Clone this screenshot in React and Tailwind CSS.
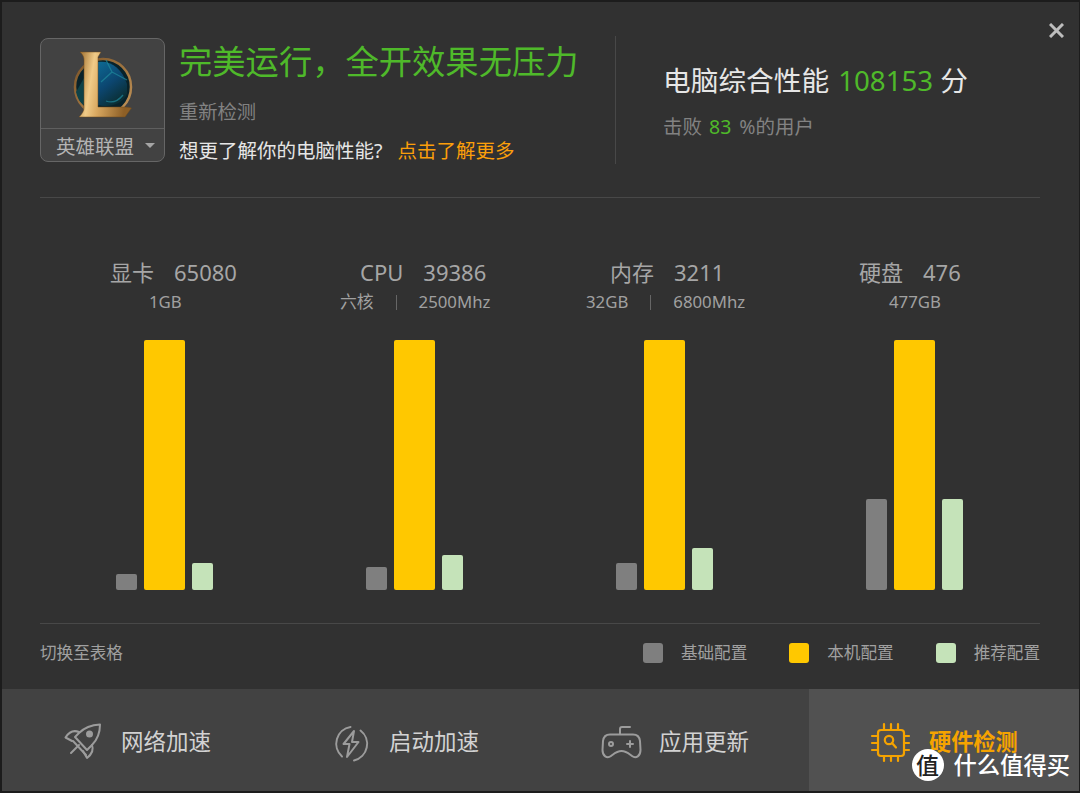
const parts = [
  {
    name: "显卡",
    score: "65080",
    titlePad: "pl-[70px]",
    subPad: "pl-[109px]",
    sub: ["1GB"],
    base: "h-[16px]",
    rec: "h-[27px]",
  },
  {
    name: "CPU",
    score: "39386",
    titlePad: "pl-[70px]",
    subPad: "pl-[50px]",
    sub: ["六核", "2500Mhz"],
    base: "h-[23px]",
    rec: "h-[35px]",
  },
  {
    name: "内存",
    score: "3211",
    titlePad: "pl-[70px]",
    subPad: "pl-[46px]",
    sub: ["32GB", "6800Mhz"],
    base: "h-[27px]",
    rec: "h-[42px]",
  },
  {
    name: "硬盘",
    score: "476",
    titlePad: "pl-[69px]",
    subPad: "pl-[99px]",
    sub: ["477GB"],
    base: "h-[91px]",
    rec: "h-[91px]",
  },
];

const LolLogo = () => (
  <svg width="62" height="70" viewBox="72 50 62 70">
    <defs>
      <linearGradient id="gold" x1="0" y1="0" x2="1" y2="0.2">
        <stop offset="0" stopColor="#9c6a2a" />
        <stop offset="0.3" stopColor="#f0cb88" />
        <stop offset="0.5" stopColor="#d9a860" />
        <stop offset="1" stopColor="#8d5f26" />
      </linearGradient>
      <linearGradient id="ring" x1="0" y1="0" x2="1" y2="1">
        <stop offset="0" stopColor="#7a5226" />
        <stop offset="1" stopColor="#c4965a" />
      </linearGradient>
      <linearGradient id="orb" x1="0" y1="0" x2="0.5" y2="1">
        <stop offset="0" stopColor="#0d6a94" />
        <stop offset="0.55" stopColor="#0c4670" />
        <stop offset="1" stopColor="#0a2f34" />
      </linearGradient>
    </defs>
    <circle cx="103" cy="87" r="28" fill="#08222a" stroke="url(#ring)" strokeWidth="2.5" />
    <path d="M98 62 C110 60 122 68 127 84 L127 94 C122 104 110 108 98 105 Z" fill="url(#orb)" />
    <path d="M106 60 L112 72 L101 82 M112 72 L127 80 M106 101 C114 104 119 100 123 95" fill="none" stroke="#1f8a9c" strokeWidth="1.3" opacity="0.7" />
    <path d="M76 92 C78 99 80 103 84 105 L84 78 Z" fill="#0e4248" />
    <path
      d="M80 52 L101 52 L98 57 L98 107 L122 107 C126 107 129 107 131.5 108 L125 117 L79 117 C82 114 84 111 84 108 L84 60 C84 57 83 55 80 52 Z"
      fill="url(#gold)"
      stroke="#6f4a1c"
      strokeWidth="0.5"
    />
  </svg>
);

const RocketIcon = () => (
  <svg width="55" height="50" viewBox="0 0 55 50" fill="none" stroke="#9c9c9c" strokeWidth="2" strokeLinecap="round" strokeLinejoin="round">
    <path d="M45 9.5C36 10 29 13 24 18L20 22L32 35L37 30C42 25 45 18 45 9.5Z" />
    <path d="M24 17C19 15 14 17 10.5 22.5L17 26" />
    <path d="M37 30C39 35 37 39 32 43L28 36" />
    <path d="M18 26L31 40M24 30L16 38" />
    <circle cx="34.5" cy="19" r="2.5" fill="#9c9c9c" />
  </svg>
);

const BoltIcon = () => (
  <svg width="55" height="50" viewBox="0 0 55 50" fill="none" stroke="#9c9c9c" strokeWidth="2" strokeLinecap="round" strokeLinejoin="round">
    <path d="M25.5 12A17 17 0 0 0 17 41.5" />
    <path d="M35.5 15.5A17 17 0 0 1 29 45.5" />
    <path d="M29 16L18.5 29H24.5L22 42L33.5 27H27Z" />
  </svg>
);

const PadIcon = () => (
  <svg width="55" height="50" viewBox="0 0 55 50" fill="none" stroke="#9c9c9c" strokeWidth="2" strokeLinecap="round" strokeLinejoin="round">
    <path d="M25 19V14C25 12.5 26 12 27 12H35" />
    <path d="M15 19.5H38C42 19.5 44.5 22 45 26L45.5 35C45.5 41 41 44 37 41C33 38 31 36 26.5 36C22 36 20 38 16 41C12 44 7.5 41 7.5 35L8 26C8.5 22 11 19.5 15 19.5Z" />
    <circle cx="16" cy="29" r="2" />
    <path d="M32 29H38M35 26V32" />
  </svg>
);

const ChipIcon = () => (
  <svg width="60" height="50" viewBox="0 0 60 50" fill="none" stroke="#f5a300" strokeWidth="2.2" strokeLinecap="round" strokeLinejoin="round">
    <rect x="18" y="15" width="26" height="26" rx="3" />
    <path d="M24 9V15M31 9V15M38 9V15M24 41V46M31 41V46M38 41V46" />
    <path d="M12 21H18M12 28H18M12 35H18M44 21H49M44 28H49M44 35H49" />
    <circle cx="29" cy="25" r="4.2" />
    <path d="M32 28L36 32.5" />
  </svg>
);

const tabs = [
  { label: "网络加速", icon: <RocketIcon />, box: "w-[268px] pl-[53px] gap-[11px]" },
  { label: "启动加速", icon: <BoltIcon />, box: "w-[270px] pl-[55px] gap-[9px]" },
  { label: "应用更新", icon: <PadIcon />, box: "w-[269px] pl-[55px] gap-[9px]" },
];

const App = () => {
  return (
    <div className="relative box-border flex h-[793px] w-[1080px] flex-col overflow-hidden border-t-2 border-r border-b-2 border-l-2 border-[#1c1c1c] bg-[#313131] font-['Noto_Sans','Noto_Sans_CJK_SC',sans-serif]">
      <div className="absolute top-[21px] right-[15px] h-[15px] w-[15px]">
        <svg width="15" height="15" viewBox="0 0 15 15" stroke="#bdbdbd" strokeWidth="3">
          <path d="M1 1L14 14M14 1L1 14" />
        </svg>
      </div>

      <div className="flex flex-1 flex-col pt-[36px] pr-[39px] pl-[38px]">
        {/* header */}
        <div className="flex h-[124px]">
          <div className="box-border flex h-[124px] w-[125px] flex-col rounded-lg border border-[#666666] bg-[#424242]">
            <div className="flex h-[89px] items-center justify-center pt-[3px]">
              <LolLogo />
            </div>
            <div className="flex flex-1 items-center border-t border-[#5f5f5f] pt-[3px] pl-[15px]">
              <span className="text-[19.5px] leading-none text-[#b4b4b4]">英雄联盟</span>
              <span className="mt-[-3px] ml-[11px] h-0 w-0 border-t-[5px] border-r-[5px] border-l-[5px] border-t-[#a5a5a5] border-r-transparent border-l-transparent"></span>
            </div>
          </div>

          <div className="ml-[14px] w-[436px]">
            <div className="mt-[-2px] text-[33.3px] leading-[50px] text-[#4fb92a]">完美运行，全开效果无压力</div>
            <div className="mt-[13px] text-[19.3px] leading-[26px] text-[#828282]">重新检测</div>
            <div className="mt-[13px] flex text-[19.5px] leading-[26px] text-[#e6e6e6]">
              想更了解你的电脑性能?
              <span className="ml-[15px] text-[#fb9f0a]">点击了解更多</span>
            </div>
          </div>

          <div className="mt-[-2px] h-[128px] w-px bg-[#484848]"></div>

          <div className="ml-[49px] pt-[20px]">
            <div className="ml-[-2px] flex items-center text-[27.7px] leading-[44px] text-[#e6e6e6]">
              电脑综合性能
              <span className="ml-[9px] text-[#4fb92a]">108153</span>
              <span className="ml-[7px]">分</span>
            </div>
            <div className="mt-[11px] ml-[-2px] flex items-center text-[19.5px] leading-[28px] text-[#828282]">
              击败
              <span className="ml-[7px] text-[#4fb92a]">83</span>
              <span className="ml-[8px]">%的用户</span>
            </div>
          </div>
        </div>

        <div className="mt-[35px] h-px bg-[#484848]"></div>

        {/* chart */}
        <div className="mt-[59px] grid grid-cols-4">
          {parts.map((p) => (
            <div key={p.name} className="flex flex-col">
              <div className={`flex h-[30px] items-center gap-[20px] text-[22px] leading-[30px] text-[#a6a6a6] ${p.titlePad}`}>
                <span>{p.name}</span>
                <span>{p.score}</span>
              </div>
              <div className={`mt-[5px] flex h-[20px] items-center text-[16.8px] leading-[20px] text-[#a0a0a0] ${p.subPad}`}>
                <span>{p.sub[0]}</span>
                {p.sub[1] && (
                  <>
                    <span className="mx-[22px] h-[15px] w-px bg-[#666666]"></span>
                    <span>{p.sub[1]}</span>
                  </>
                )}
              </div>
              <div className="mt-[28px] flex h-[250px] items-end gap-[7px] pl-[75.5px]">
                <div className={`w-[21px] rounded-[2px] bg-[#7f7f7f] ${p.base}`}></div>
                <div className="h-[250px] w-[41.5px] rounded-[2px] bg-[#ffc800]"></div>
                <div className={`w-[21px] rounded-[2px] bg-[#c5e3b9] ${p.rec}`}></div>
              </div>
            </div>
          ))}
        </div>

        <div className="mt-[33px] h-px bg-[#484848]"></div>

        {/* legend */}
        <div className="mt-[14px] flex h-[30px] items-center text-[16.6px] text-[#a0a0a0]">
          <span>切换至表格</span>
          <div className="ml-auto flex items-center">
            <span className="h-[20px] w-[20px] rounded-[3px] bg-[#7f7f7f]"></span>
            <span className="ml-[18px]">基础配置</span>
            <span className="ml-[42px] h-[20px] w-[20px] rounded-[3px] bg-[#ffc800]"></span>
            <span className="ml-[18px]">本机配置</span>
            <span className="ml-[42px] h-[20px] w-[20px] rounded-[3px] bg-[#c5e3b9]"></span>
            <span className="ml-[18px]">推荐配置</span>
          </div>
        </div>
      </div>

      {/* bottom tabs */}
      <div className="flex h-[102px] bg-[#424242]">
        {tabs.map((t) => (
          <div key={t.label} className={`flex items-center text-[22.5px] text-[#d2d2d2] ${t.box}`}>
            {t.icon}
            <span className="pt-[3px]">{t.label}</span>
          </div>
        ))}
        <div className="flex flex-1 items-center gap-[9px] bg-[#515151] pl-[51px] text-[22.2px] font-bold text-[#f5a300]">
          <ChipIcon />
          <span className="pt-[3px]">硬件检测</span>
        </div>
      </div>

      {/* watermark */}
      <div className="absolute right-[9px] bottom-[10px] flex items-center gap-[10px]">
        <span className="flex h-[32px] w-[32px] items-center justify-center rounded-full bg-white text-[23px] leading-none font-medium text-[#222222]">
          值
        </span>
        <span className="text-[23.3px] leading-[32px] font-medium text-white">什么值得买</span>
      </div>
    </div>
  );
};

export default App;
